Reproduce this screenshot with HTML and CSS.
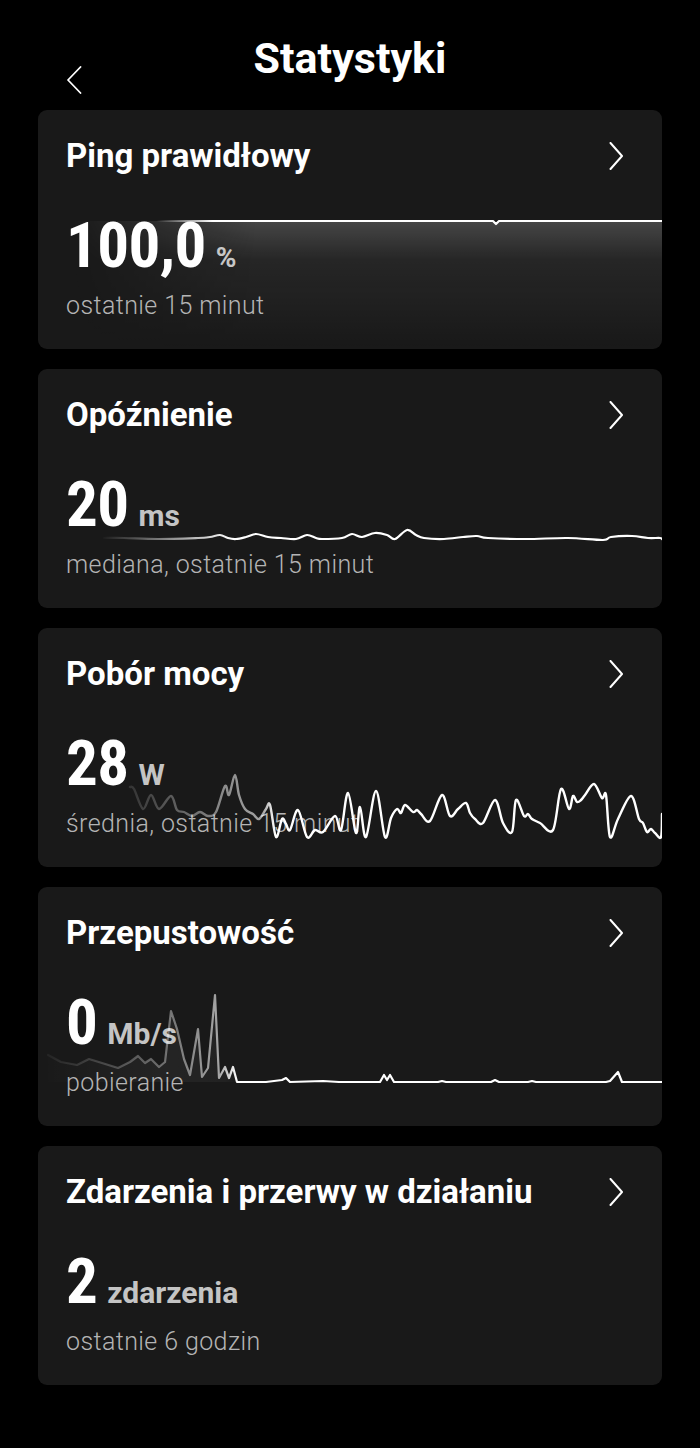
FILE: index.html
```html
<!DOCTYPE html>
<html lang="pl">
<head>
<meta charset="utf-8">
<title>Statystyki</title>
<link rel="stylesheet" href="styles.css">
</head>
<body>
<header class="header">
  <svg class="back" viewBox="0 0 16 28" width="16" height="28"><path d="M14.5 1 L2 14 L14.5 27" fill="none" stroke="#fff" stroke-width="1.8" stroke-linecap="round" stroke-linejoin="round"/></svg>
  <h1 class="title">Statystyki</h1>
</header>

<main class="cards">
  <section class="card">
    <div class="card-head">
      <h2 class="card-title">Ping prawidłowy</h2>
      <svg class="chev" viewBox="0 0 14 28" width="14" height="28"><path d="M1.5 1 L13 14 L1.5 27" fill="none" stroke="#fff" stroke-width="2" stroke-linecap="round" stroke-linejoin="round"/></svg>
    </div>
    <div class="value"><span class="num">100,0</span><span class="unit unit-pct">%</span></div>
    <div class="sub">ostatnie 15 minut</div>
    <svg class="chart" viewBox="0 0 624 239" preserveAspectRatio="none">
      <defs>
        <linearGradient id="f1v" x1="0" y1="111" x2="0" y2="239" gradientUnits="userSpaceOnUse">
          <stop offset="0" stop-color="#fff" stop-opacity="0.2"/>
          <stop offset="0.3" stop-color="#fff" stop-opacity="0.06"/>
          <stop offset="1" stop-color="#fff" stop-opacity="0"/>
        </linearGradient>
        <linearGradient id="f1h" x1="0" y1="0" x2="624" y2="0" gradientUnits="userSpaceOnUse">
          <stop offset="0.05" stop-color="#fff" stop-opacity="0"/>
          <stop offset="0.35" stop-color="#fff" stop-opacity="1"/>
        </linearGradient>
        <mask id="m1"><rect x="0" y="0" width="624" height="239" fill="url(#f1h)"/></mask>
        <linearGradient id="s1" x1="0" y1="0" x2="624" y2="0" gradientUnits="userSpaceOnUse">
          <stop offset="0.19" stop-color="#fff" stop-opacity="0"/>
          <stop offset="0.28" stop-color="#fff" stop-opacity="1"/>
        </linearGradient>
      </defs>
      <path d="M0,111 L455,111 L458,114 L461,111 L624,111 L624,239 L0,239 Z" fill="url(#f1v)" mask="url(#m1)"/>
      <path d="M110,111 L455,111 L458,114 L461,111 L624,111" fill="none" stroke="url(#s1)" stroke-width="2.2" stroke-linejoin="round"/>
    </svg>
  </section>

  <section class="card">
    <div class="card-head">
      <h2 class="card-title">Opóźnienie</h2>
      <svg class="chev" viewBox="0 0 14 28" width="14" height="28"><path d="M1.5 1 L13 14 L1.5 27" fill="none" stroke="#fff" stroke-width="2" stroke-linecap="round" stroke-linejoin="round"/></svg>
    </div>
    <div class="value"><span class="num">20</span><span class="unit">ms</span></div>
    <div class="sub">mediana, ostatnie 15 minut</div>
    <svg class="chart" viewBox="0 0 624 239" preserveAspectRatio="none">
      <defs>
        <linearGradient id="s2" x1="0" y1="0" x2="624" y2="0" gradientUnits="userSpaceOnUse">
          <stop offset="0.1" stop-color="#fff" stop-opacity="0"/>
          <stop offset="0.2" stop-color="#fff" stop-opacity="0.45"/>
          <stop offset="0.31" stop-color="#fff" stop-opacity="1"/>
        </linearGradient>
      </defs>
      <polyline class="smooth" points="66,169 86,169 120,170 160,169 172,168 182,166 190,169 198,170 208,168 218,165 230,168 243,169 258,170 269,166 278,169 284,170 304,169 314,165 324,168 337,164 349,166 357,170 369,161 378,166 386,169 406,170 425,168 439,167 450,169 488,170 530,169 565,171 573,168 594,167 610,169 622,169 624,170" fill="none" stroke="url(#s2)" stroke-width="2.2" stroke-linejoin="round" stroke-linecap="round"/>
    </svg>
  </section>

  <section class="card">
    <div class="card-head">
      <h2 class="card-title">Pobór mocy</h2>
      <svg class="chev" viewBox="0 0 14 28" width="14" height="28"><path d="M1.5 1 L13 14 L1.5 27" fill="none" stroke="#fff" stroke-width="2" stroke-linecap="round" stroke-linejoin="round"/></svg>
    </div>
    <div class="value"><span class="num">28</span><span class="unit">W</span></div>
    <div class="sub">średnia, ostatnie 15 minut</div>
    <svg class="chart" viewBox="0 0 624 239" preserveAspectRatio="none">
      <defs>
        <linearGradient id="s3" x1="0" y1="0" x2="624" y2="0" gradientUnits="userSpaceOnUse">
          <stop offset="0.12" stop-color="#fff" stop-opacity="0.05"/>
          <stop offset="0.3" stop-color="#fff" stop-opacity="0.5"/>
          <stop offset="0.36" stop-color="#fff" stop-opacity="0.6"/>
          <stop offset="0.38" stop-color="#fff" stop-opacity="1"/>
        </linearGradient>
      </defs>
      <polyline class="smooth" points="92,159 96,161 105,181 113,167 121,181 133,168 139,182 146,184 154,188 162,184 170,188 178,184 187,158 191,167 197,147 201,167 207,181 215,186 221,191 228,181 232,177 238,209 244,191 248,196 252,202 260,182 269,209 277,202 285,204 297,188 303,202 310,165 318,205 322,179 328,209 338,163 347,209 353,190 359,181 363,185 367,177 375,184 379,182 383,186 392,193 404,167 412,188 420,181 428,175 432,185 437,191 445,195 457,172 465,195 474,204 478,172 486,188 490,186 494,191 502,195 515,202 523,161 531,181 535,168 539,174 543,172 547,167 556,156 564,170 568,167 572,209 580,191 593,168 601,191 605,195 609,204 613,201 617,205 623,209 624,186" fill="none" stroke="url(#s3)" stroke-width="2.4" stroke-linejoin="round" stroke-linecap="round"/>
    </svg>
  </section>

  <section class="card">
    <div class="card-head">
      <h2 class="card-title">Przepustowość</h2>
      <svg class="chev" viewBox="0 0 14 28" width="14" height="28"><path d="M1.5 1 L13 14 L1.5 27" fill="none" stroke="#fff" stroke-width="2" stroke-linecap="round" stroke-linejoin="round"/></svg>
    </div>
    <div class="value"><span class="num">0</span><span class="unit">Mb/s</span></div>
    <div class="sub">pobieranie</div>
    <svg class="chart" viewBox="0 0 624 239" preserveAspectRatio="none">
      <defs>
        <linearGradient id="s4" x1="0" y1="0" x2="624" y2="0" gradientUnits="userSpaceOnUse">
          <stop offset="0.01" stop-color="#fff" stop-opacity="0.04"/>
          <stop offset="0.2" stop-color="#fff" stop-opacity="0.35"/>
          <stop offset="0.29" stop-color="#fff" stop-opacity="0.6"/>
          <stop offset="0.32" stop-color="#fff" stop-opacity="1"/>
        </linearGradient>
        <linearGradient id="f4" x1="0" y1="0" x2="624" y2="0" gradientUnits="userSpaceOnUse">
          <stop offset="0" stop-color="#fff" stop-opacity="0"/>
          <stop offset="0.2" stop-color="#fff" stop-opacity="0.05"/>
          <stop offset="0.3" stop-color="#fff" stop-opacity="0.04"/>
          <stop offset="0.32" stop-color="#fff" stop-opacity="0"/>
        </linearGradient>
      </defs>
      <polygon points="10,168 23,175 39,178 51,172 64,176 80,181 92,175 100,169 107,176 113,172 121,180 127,175 133,124 139,142 146,172 152,188 160,142 164,190 170,181 177,108 181,191 187,180 191,191 195,180 199,195 10,195" fill="url(#f4)"/>
      <polyline points="10,168 23,175 39,178 51,172 64,176 80,181 92,175 100,169 107,176 113,172 121,180 127,175 133,124 139,142 146,172 152,188 160,142 164,190 170,181 177,108 181,191 187,180 191,191 195,180 199,195 228,195 244,193 248,191 252,195 285,194 301,195 342,195 346,188 349,193 352,188 356,195 400,195 404,194 408,195 453,195 457,193 461,195 490,195 494,194 498,195 568,195 572,194 580,185 584,195 624,195" fill="none" stroke="url(#s4)" stroke-width="2.2" stroke-linejoin="round" stroke-linecap="round"/>
    </svg>
  </section>

  <section class="card">
    <div class="card-head">
      <h2 class="card-title">Zdarzenia i przerwy w działaniu</h2>
      <svg class="chev" viewBox="0 0 14 28" width="14" height="28"><path d="M1.5 1 L13 14 L1.5 27" fill="none" stroke="#fff" stroke-width="2" stroke-linecap="round" stroke-linejoin="round"/></svg>
    </div>
    <div class="value"><span class="num">2</span><span class="unit">zdarzenia</span></div>
    <div class="sub">ostatnie 6 godzin</div>
  </section>
</main>
<script src="app.js"></script>
</body>
</html>
```
FILE: styles.css
```css
html, body {
  margin: 0;
  padding: 0;
  background: #000;
}

body {
  width: 700px;
  min-height: 1448px;
  font-family: Roboto, "DejaVu Sans", sans-serif;
  color: #fff;
}

.header {
  box-sizing: border-box;
  height: 110px;
  padding-top: 33px;
  display: grid;
  grid-template-columns: 1fr auto 1fr;
  align-items: start;
}

.back {
  grid-column: 1;
  grid-row: 1;
  justify-self: start;
  display: block;
  margin: 33px 0 0 66px;
}

.title {
  grid-column: 2;
  grid-row: 1;
  margin: 0;
  font-size: 43px;
  line-height: 50px;
  font-weight: 700;
  color: #fff;
}

.cards {
  display: flex;
  flex-direction: column;
  gap: 20px;
  padding: 0 38px;
}

.card {
  position: relative;
  box-sizing: border-box;
  height: 239px;
  padding: 26px 28px 0;
  background: #191919;
  border-radius: 9px;
  overflow: hidden;
}

.card-head {
  display: flex;
  justify-content: space-between;
  align-items: center;
  height: 40px;
}

.card-title {
  margin: 0;
  font-size: 33px;
  line-height: 40px;
  font-weight: 700;
  color: #fff;
  white-space: nowrap;
}

.chev {
  display: block;
  flex: none;
  margin-right: 11px;
}

.value {
  display: flex;
  align-items: baseline;
  gap: 10px;
  height: 63px;
  margin-top: 38px;
}

.num {
  font-size: 63px;
  line-height: 63px;
  font-weight: 700;
  font-stretch: 75%;
  letter-spacing: -0.6px;
  color: #fff;
}

.unit {
  font-size: 30px;
  line-height: 36px;
  font-weight: 700;
  font-stretch: 88%;
  letter-spacing: 0;
  color: #c4c4c4;
}

.unit-pct {
  font-size: 28px;
  font-stretch: 100%;
  letter-spacing: 1px;
}

.sub {
  margin-top: 14px;
  font-size: 25px;
  line-height: 30px;
  font-weight: 300;
  letter-spacing: 0.4px;
  color: #b4b4b4;
  white-space: nowrap;
}

.chart {
  position: absolute;
  left: 0;
  top: 0;
  width: 100%;
  height: 100%;
  pointer-events: none;
}
```
FILE: app.js
```js
// Turn polyline data into smooth Catmull-Rom curves.
document.querySelectorAll('polyline.smooth').forEach(function (pl) {
  var nums = pl.getAttribute('points').trim().split(/[\s,]+/).map(Number);
  var p = [];
  for (var i = 0; i < nums.length; i += 2) p.push([nums[i], nums[i + 1]]);
  var d = 'M' + p[0][0] + ',' + p[0][1];
  for (var j = 0; j < p.length - 1; j++) {
    var p0 = p[j - 1] || p[j], p1 = p[j], p2 = p[j + 1], p3 = p[j + 2] || p2;
    var c1x = p1[0] + (p2[0] - p0[0]) / 6, c1y = p1[1] + (p2[1] - p0[1]) / 6;
    var c2x = p2[0] - (p3[0] - p1[0]) / 6, c2y = p2[1] - (p3[1] - p1[1]) / 6;
    d += ' C' + c1x.toFixed(1) + ',' + c1y.toFixed(1) + ' ' + c2x.toFixed(1) + ',' + c2y.toFixed(1) + ' ' + p2[0] + ',' + p2[1];
  }
  var path = document.createElementNS('http://www.w3.org/2000/svg', 'path');
  ['fill', 'stroke', 'stroke-width', 'stroke-linejoin', 'stroke-linecap'].forEach(function (a) {
    if (pl.hasAttribute(a)) path.setAttribute(a, pl.getAttribute(a));
  });
  path.setAttribute('d', d);
  pl.parentNode.replaceChild(path, pl);
});
```
